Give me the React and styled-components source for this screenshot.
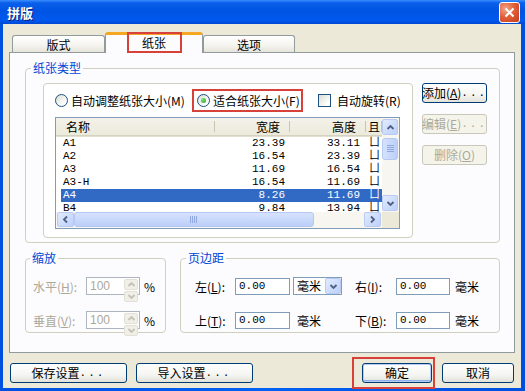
import React from 'react';
import styled, { createGlobalStyle, css } from 'styled-components';

const ui = `"Noto Sans CJK SC", "Liberation Sans", sans-serif`;
const mono = `"Liberation Mono", "Noto Sans CJK SC", monospace`;

const GlobalStyle = createGlobalStyle`
  html, body { margin: 0; padding: 0; background: #fff; }
  body { font-family: ${ui}; font-size: 12px; color: #000; }
  * { box-sizing: border-box; }
`;

const Window = styled.div`
  width: 525px;
  height: 391px;
  display: flex;
  flex-direction: column;
  overflow: hidden;
`;

const TitleBar = styled.div`
  height: 24px;
  flex: none;
  display: flex;
  align-items: center;
  justify-content: space-between;
  padding: 0 5px 0 7px;
  background: linear-gradient(to bottom, #3a8fff 0%, #0a5fea 12%, #0054e3 45%, #0058ee 85%, #0048d4 100%);
`;

const Title = styled.span`
  color: #fff;
  font-weight: bold;
  font-size: 13px;
  text-shadow: 1px 1px 0 #0a1e7a;
`;

const CloseButton = styled.div`
  width: 21px;
  height: 21px;
  border: 1px solid #fff;
  border-radius: 3px;
  display: flex;
  align-items: center;
  justify-content: center;
  background: radial-gradient(circle at 30% 30%, #f4a58a 0%, #e2603a 45%, #c23c1a 100%);
`;

const Frame = styled.div`
  flex: 1;
  display: flex;
  padding: 0 4px 3px 3px;
  background: linear-gradient(to right, #0050e0, #0061f2 50%, #0050e0);
`;

const Body = styled.div`
  flex: 1;
  display: flex;
  flex-direction: column;
  background: #ece9d8;
  padding: 8px 6px 5px 6px;
`;

const TabRow = styled.div`
  height: 21px;
  display: flex;
  align-items: flex-end;
  padding-left: 3px;
  margin-bottom: -1px;
  position: relative;
  z-index: 1;
`;

const Tab = styled.div`
  width: ${p => p.w}px;
  display: flex;
  align-items: center;
  justify-content: center;
  border: 1px solid #919b9c;
  border-bottom: none;
  border-radius: 3px 3px 0 0;
  ${p => p.active ? css`
    height: 21px;
    background: #fcfcfe;
    border-top: 3px solid #f5a623;
  ` : css`
    height: 17px;
    margin-bottom: 1px;
    background: linear-gradient(to bottom, #fff 0%, #f4f3ee 60%, #e6e4da 100%);
  `}
`;

const TabMark = styled.span`
  width: 55px;
  height: 21px;
  margin-top: -3px;
  border: 2px solid #d8403a;
  display: flex;
  align-items: center;
  justify-content: center;
`;

const Panel = styled.div`
  height: 301px;
  flex: none;
  border: 1px solid #919b9c;
  background: #fcfcfe;
  padding: 8px 14px 0 15px;
  display: flex;
  flex-direction: column;
`;

const Group = styled.fieldset`
  margin: 0;
  min-width: 0;
  width: ${p => p.w}px;
  border: 1px solid #d0d0bf;
  border-radius: 4px;
  padding: ${p => p.pad};
`;

const Legend = styled.legend`
  padding: 0 2px;
  margin-left: ${p => p.ml}px;
  line-height: 14px;
  height: 14px;
  color: #0046d5;
`;

const PaperGroupBody = styled.div`
  display: flex;
  gap: 9px;
`;

const InnerBox = styled.div`
  width: 370px;
  height: 155px;
  border: 1px solid #d0d0bf;
  border-radius: 4px;
  background: #fff;
  padding: 8px 0 0 11px;
  display: flex;
  flex-direction: column;
  gap: 9px;
`;

const OptionRow = styled.div`
  height: 16px;
  display: flex;
  align-items: center;
`;

const OptionItem = styled.label`
  display: flex;
  align-items: center;
  gap: 3px;
  width: ${p => (p.w ? `${p.w}px` : 'auto')};
  margin-left: ${p => p.ml || 0}px;
  white-space: nowrap;
`;

const Marked = styled.div`
  width: 111px;
  height: 23px;
  margin: -4px 0;
  border: 2px solid #d8403a;
  padding-left: 3px;
  display: flex;
  align-items: center;
`;

const RadioCircle = styled.span`
  width: 13px;
  height: 13px;
  flex: none;
  border: 1px solid #1c5180;
  border-radius: 50%;
  background: linear-gradient(135deg, #dcdcd4 0%, #fff 80%);
  display: inline-flex;
  align-items: center;
  justify-content: center;
  ${p => p.checked && css`
    &::after {
      content: '';
      width: 5px;
      height: 5px;
      border-radius: 50%;
      background: radial-gradient(circle at 35% 35%, #7ee07e, #21a121);
    }
  `}
`;

const CheckSquare = styled.span`
  width: 13px;
  height: 13px;
  flex: none;
  border: 1px solid #1c5180;
  background: linear-gradient(135deg, #dcdcd4 0%, #fff 80%);
  margin-right: 3px;
`;

const ListBox = styled.div`
  width: 345px;
  height: 112px;
  border: 1px solid #7f9db9;
  background: #fff;
  display: grid;
  grid-template-columns: 1fr 17px;
  grid-template-rows: 1fr 16px;
`;

const ListView = styled.div`
  overflow: hidden;
`;

const HeaderRow = styled.div`
  height: 18px;
  display: flex;
  background: linear-gradient(to bottom, #f4f2ea, #ebeadb);
  border-bottom: 1px solid #d6d2c2;
  box-shadow: 0 1px 0 #e2dfd0;
  white-space: nowrap;
`;

const HeadCell = styled.div`
  position: relative;
  width: ${p => p.w}px;
  flex: none;
  line-height: 17px;
  text-align: ${p => p.align || 'left'};
  padding: ${p => p.pad};
  &::after {
    content: '';
    position: absolute;
    right: 0;
    top: 3px;
    bottom: 3px;
    width: 1px;
    background: #c7c5b2;
  }
`;

const Rows = styled.div`
  padding: 1px 0 0 5px;
`;

const Row = styled.div`
  height: 13px;
  display: flex;
  line-height: 13px;
  font-family: ${mono};
  font-size: 11px;
  white-space: nowrap;
  ${p => p.selected && css`
    background: #316ac5;
    color: #fff;
  `}
`;

const Cell = styled.div`
  width: ${p => p.w}px;
  flex: none;
  text-align: ${p => p.align || 'left'};
  padding: ${p => p.pad};
`;

const VScroll = styled.div`
  grid-row: 1;
  grid-column: 2;
  background: #f7f6f1;
  display: flex;
  flex-direction: column;
  padding: 1px 0;
`;

const HScroll = styled.div`
  grid-row: 2;
  grid-column: 1;
  background: #f7f6f1;
  display: flex;
  padding: 0 1px;
`;

const Corner = styled.div`
  grid-row: 2;
  grid-column: 2;
  background: #ece9d8;
`;

const ScrollButton = styled.div`
  width: ${p => (p.horizontal ? '17px' : '16px')};
  height: ${p => (p.horizontal ? '15px' : '16px')};
  flex: none;
  border: 1px solid #b9cbf3;
  border-radius: 2px;
  background: linear-gradient(135deg, #e2ebfe, #bcd0fa);
  display: flex;
  align-items: center;
  justify-content: center;
`;

const Thumb = styled.div`
  flex: none;
  ${p => p.horizontal ? css`
    width: ${p.size}px;
    height: 15px;
  ` : css`
    height: ${p.size}px;
    width: 16px;
    margin-top: ${p.offset}px;
  `}
  border: 1px solid #b5c8f3;
  border-radius: 3px;
  background: linear-gradient(${p => (p.horizontal ? 'to bottom' : 'to right')}, #d6e2fd, #bccff9);
  display: flex;
  align-items: center;
  justify-content: center;
`;

const Track = styled.div`
  flex: 1;
`;

const SideButtons = styled.div`
  display: flex;
  flex-direction: column;
  gap: 11px;
`;

const Button = styled.div`
  width: ${p => p.w}px;
  height: 20px;
  flex: none;
  border: 1px solid ${p => (p.disabled ? '#c9c7ba' : '#003c74')};
  border-radius: 3px;
  background: ${p => p.disabled
    ? '#f5f4ea'
    : 'linear-gradient(to bottom, #ffffff 0%, #f5f5f2 60%, #e3e2da 100%)'};
  color: ${p => (p.disabled ? '#aca899' : '#000')};
  display: flex;
  align-items: center;
  justify-content: center;
  white-space: nowrap;
  line-height: 1;
  ${p => p.focused && css`box-shadow: inset 0 0 0 1px #b3cdf5, inset 0 -1px 0 1px #8fb1ea;`}
`;

const Dots = styled.span`
  letter-spacing: 2px;
  font-family: ${mono};
  font-size: 11px;
`;

const LowerRow = styled.div`
  display: flex;
  gap: 14px;
  margin-top: 8px;
`;

const FormGrid = styled.div`
  display: grid;
  grid-template-columns: ${p => p.cols};
  grid-auto-rows: 18px;
  row-gap: 16px;
  align-items: center;
`;

const FieldLabel = styled.span`
  color: ${p => (p.disabled ? '#aca899' : '#000')};
  white-space: nowrap;
`;

const SpinBox = styled.div`
  width: 54px;
  height: 18px;
  border: 1px solid #aeb4bd;
  background: #fff;
  display: flex;
  align-items: stretch;
`;

const SpinText = styled.span`
  flex: 1;
  padding-left: 3px;
  color: #aca899;
  line-height: 16px;
  font-family: "Liberation Sans", sans-serif;
`;

const SpinArrows = styled.div`
  width: 15px;
  display: flex;
  flex-direction: column;
  gap: 1px;
  padding: 1px 1px 1px 0;
`;

const SpinHalf = styled.div`
  flex: 1;
  border-radius: 2px;
  background: #f0efe8;
  border: 1px solid #e2e0d6;
  display: flex;
  align-items: center;
  justify-content: center;
`;

const TextInput = styled.div`
  width: ${p => p.w}px;
  height: 17px;
  border: 1px solid #7f9db9;
  background: #fff;
  padding-left: 3px;
  line-height: 15px;
  font-family: ${mono};
  font-size: 11px;
`;

const Select = styled.div`
  width: 49px;
  height: 18px;
  margin-left: 3px;
  border: 1px solid #7f9db9;
  background: #fff;
  display: flex;
  align-items: stretch;
`;

const SelectText = styled.span`
  flex: 1;
  padding-left: 3px;
  line-height: 16px;
`;

const SelectButton = styled.div`
  width: 16px;
  border: 1px solid #b9cbf3;
  border-radius: 2px;
  background: linear-gradient(135deg, #e2ebfe, #bcd0fa);
  display: flex;
  align-items: center;
  justify-content: center;
`;

const Unit = styled.span`
  padding-left: ${p => p.pl}px;
`;

const Footer = styled.div`
  margin-top: 10px;
  height: 20px;
  display: flex;
  align-items: center;
  padding: 0 1px;
`;

const FooterLeft = styled.div`
  display: flex;
  gap: 9px;
`;

const FooterRight = styled.div`
  margin-left: auto;
  display: flex;
  align-items: center;
  gap: 7px;
`;

const ButtonMark = styled.div`
  border: 2px solid #d8403a;
  padding: 4px 1px 4px 8px;
  margin: -6px 0;
`;

const Chevron = ({ dir = 'up', color = '#4d6185' }) => {
  const paths = {
    up: 'M1.5 6 L4.5 3 L7.5 6',
    down: 'M1.5 3 L4.5 6 L7.5 3',
    left: 'M6 1.5 L3 4.5 L6 7.5',
    right: 'M3 1.5 L6 4.5 L3 7.5',
  };
  return (
    <svg width="9" height="9" viewBox="0 0 9 9">
      <path d={paths[dir]} fill="none" stroke={color} strokeWidth="1.8" />
    </svg>
  );
};

const Grip = ({ horizontal }) => (
  <svg width={horizontal ? 8 : 7} height={horizontal ? 7 : 8} viewBox={horizontal ? '0 0 8 7' : '0 0 7 8'}>
    {[0, 2, 4, 6].map(i => horizontal
      ? <line key={i} x1={i + 0.5} y1="0" x2={i + 0.5} y2="7" stroke="#8fa8e0" />
      : <line key={i} x1="0" y1={i + 0.5} x2="7" y2={i + 0.5} stroke="#8fa8e0" />)}
  </svg>
);

const papers = [
  { name: 'A1', w: '23.39', h: '33.11' },
  { name: 'A2', w: '16.54', h: '23.39' },
  { name: 'A3', w: '11.69', h: '16.54' },
  { name: 'A3-H', w: '16.54', h: '11.69' },
  { name: 'A4', w: '8.26', h: '11.69', selected: true },
  { name: 'B4', w: '9.84', h: '13.94' },
];

const Spin = () => (
  <SpinBox>
    <SpinText>100</SpinText>
    <SpinArrows>
      <SpinHalf><Chevron dir="up" color="#c4c2b6" /></SpinHalf>
      <SpinHalf><Chevron dir="down" color="#c4c2b6" /></SpinHalf>
    </SpinArrows>
  </SpinBox>
);

export default function App() {
  return (
    <>
      <GlobalStyle />
      <Window>
        <TitleBar>
          <Title>拼版</Title>
          <CloseButton>
            <svg width="11" height="11" viewBox="0 0 11 11">
              <path d="M1.5 1.5 L9.5 9.5 M9.5 1.5 L1.5 9.5" stroke="#fff" strokeWidth="2" />
            </svg>
          </CloseButton>
        </TitleBar>
        <Frame>
          <Body>
            <TabRow>
              <Tab w={93}>版式</Tab>
              <Tab w={98} active><TabMark>纸张</TabMark></Tab>
              <Tab w={92}>选项</Tab>
            </TabRow>
            <Panel>
              <Group w={475} pad="8px 12px 4px 17px">
                <Legend ml={-12}>纸张类型</Legend>
                <PaperGroupBody>
                  <InnerBox>
                    <OptionRow>
                      <OptionItem w={137}>
                        <RadioCircle />
                        自动调整纸张大小(M)
                      </OptionItem>
                      <Marked>
                        <OptionItem>
                          <RadioCircle checked />
                          适合纸张大小(F)
                        </OptionItem>
                      </Marked>
                      <OptionItem ml={15}>
                        <CheckSquare />
                        自动旋转(R)
                      </OptionItem>
                    </OptionRow>
                    <ListBox>
                      <ListView>
                        <HeaderRow>
                          <HeadCell w={159} pad="0 0 0 10px">名称</HeadCell>
                          <HeadCell w={75} align="right" pad="0 10px 0 0">宽度</HeadCell>
                          <HeadCell w={76} align="right" pad="0 10px 0 0">高度</HeadCell>
                          <HeadCell w={16} pad="0 0 0 2px">且</HeadCell>
                        </HeaderRow>
                        <Rows>
                          {papers.map(p => (
                            <Row key={p.name} selected={p.selected}>
                              <Cell w={154} pad="0 0 0 2px">{p.name}</Cell>
                              <Cell w={75} align="right" pad="0 5px 0 0">{p.w}</Cell>
                              <Cell w={76} align="right" pad="0 6px 0 0">{p.h}</Cell>
                              <Cell w={12} pad="0 0 0 3px">ㄩ</Cell>
                            </Row>
                          ))}
                        </Rows>
                      </ListView>
                      <VScroll>
                        <ScrollButton><Chevron dir="up" /></ScrollButton>
                        <Thumb size={22} offset={3}><Grip /></Thumb>
                        <Track />
                        <ScrollButton><Chevron dir="down" /></ScrollButton>
                      </VScroll>
                      <HScroll>
                        <ScrollButton horizontal><Chevron dir="left" /></ScrollButton>
                        <Thumb horizontal size={240}><Grip horizontal /></Thumb>
                        <Track />
                        <ScrollButton horizontal><Chevron dir="right" /></ScrollButton>
                      </HScroll>
                      <Corner />
                    </ListBox>
                  </InnerBox>
                  <SideButtons>
                    <Button w={65}>添加(<u>A</u>)<Dots>...</Dots></Button>
                    <Button w={65} disabled>编辑(<u>E</u>)<Dots>...</Dots></Button>
                    <Button w={65} disabled>删除(<u>O</u>)</Button>
                  </SideButtons>
                </PaperGroupBody>
              </Group>
              <LowerRow>
                <Group w={141} pad="12px 4px 3px 7px">
                  <Legend ml={-3}>缩放</Legend>
                  <FormGrid cols="53px 54px auto">
                    <FieldLabel disabled>水平(<u>H</u>):</FieldLabel>
                    <Spin />
                    <Unit pl={4}>%</Unit>
                    <FieldLabel disabled>垂直(<u>V</u>):</FieldLabel>
                    <Spin />
                    <Unit pl={4}>%</Unit>
                  </FormGrid>
                </Group>
                <Group w={320} pad="12px 4px 3px 14px">
                  <Legend ml={-9}>页边距</Legend>
                  <FormGrid cols="40px 55px 65px 41px 54px auto">
                    <FieldLabel>左(<u>L</u>):</FieldLabel>
                    <TextInput w={55}>0.00</TextInput>
                    <Select>
                      <SelectText>毫米</SelectText>
                      <SelectButton><Chevron dir="down" /></SelectButton>
                    </Select>
                    <FieldLabel>右(<u>I</u>):</FieldLabel>
                    <TextInput w={54}>0.00</TextInput>
                    <Unit pl={5}>毫米</Unit>
                    <FieldLabel>上(<u>T</u>):</FieldLabel>
                    <TextInput w={55}>0.00</TextInput>
                    <Unit pl={7}>毫米</Unit>
                    <FieldLabel>下(<u>B</u>):</FieldLabel>
                    <TextInput w={54}>0.00</TextInput>
                    <Unit pl={5}>毫米</Unit>
                  </FormGrid>
                </Group>
              </LowerRow>
            </Panel>
            <Footer>
              <FooterLeft>
                <Button w={117}>保存设置<Dots>...</Dots></Button>
                <Button w={117}>导入设置<Dots>...</Dots></Button>
              </FooterLeft>
              <FooterRight>
                <ButtonMark>
                  <Button w={70} focused>确定</Button>
                </ButtonMark>
                <Button w={72}>取消</Button>
              </FooterRight>
            </Footer>
          </Body>
        </Frame>
      </Window>
    </>
  );
}
